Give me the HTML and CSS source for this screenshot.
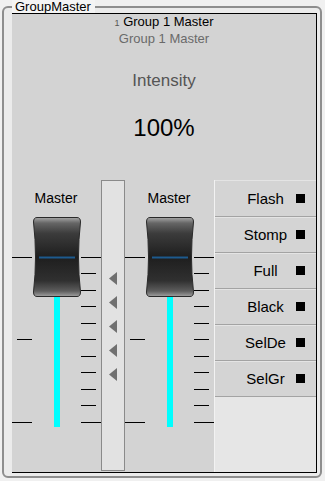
FILE: index.html
```html
<!DOCTYPE html>
<html lang="en">

<head>
    <meta charset="UTF-8">
    <meta name="viewport" content="width=device-width, initial-scale=1.0">
    <title>GroupMaster</title>
    <link rel="stylesheet" href="styles.css">
</head>

<body>
    <svg class="defs" aria-hidden="true">
        <defs>
            <linearGradient id="knob" x1="0" y1="0" x2="0" y2="1">
                <stop offset="0" stop-color="#a8a8a8"/>
                <stop offset="0.07" stop-color="#666"/>
                <stop offset="0.2" stop-color="#3c3c3c"/>
                <stop offset="0.5" stop-color="#1e1e1e"/>
                <stop offset="0.8" stop-color="#303030"/>
                <stop offset="0.93" stop-color="#5c5c5c"/>
                <stop offset="1" stop-color="#a0a0a0"/>
            </linearGradient>
            <symbol id="fader" viewBox="0 0 89 255">
                <!-- left scale -->
                <rect x="0" y="40" width="20" height="1"/>
                <rect x="5" y="122" width="15" height="1"/>
                <rect x="0" y="205" width="20" height="1"/>
                <!-- right scale -->
                <rect x="69" y="40" width="20" height="1"/>
                <rect x="69" y="56" width="15" height="1"/>
                <rect x="69" y="73" width="15" height="1"/>
                <rect x="69" y="89" width="15" height="1"/>
                <rect x="69" y="106" width="15" height="1"/>
                <rect x="69" y="122" width="15" height="1"/>
                <rect x="69" y="139" width="15" height="1"/>
                <rect x="69" y="155" width="15" height="1"/>
                <rect x="69" y="172" width="15" height="1"/>
                <rect x="69" y="188" width="15" height="1"/>
                <rect x="69" y="205" width="20" height="1"/>
                <!-- level -->
                <rect x="42" y="78" width="6" height="132" fill="#00ffff"/>
                <!-- knob -->
                <path transform="translate(21,0)" d="M4,0.5 H44 Q47.5,0.5 47.5,5 Q43.5,40 47.5,75 Q47.5,79.5 44,79.5 H4 Q0.5,79.5 0.5,75 Q4.5,40 0.5,5 Q0.5,0.5 4,0.5 Z" fill="url(#knob)" stroke="#2a2a2a" stroke-width="1"/>
                <rect x="27" y="39.5" width="36" height="2" fill="#1d5a8e"/>
            </symbol>
        </defs>
    </svg>

    <fieldset class="group">
        <legend>GroupMaster</legend>
        <div class="panel">
            <div class="head">
                <div class="title"><span class="num">1</span> Group 1 Master</div>
                <div class="subtitle">Group 1 Master</div>
                <div class="param">Intensity</div>
                <div class="value">100%</div>
            </div>
            <div class="deck">
                <div class="fader">
                    <div class="fader-label">Master</div>
                    <svg class="fader-svg" width="89" height="255"><use href="#fader"/></svg>
                </div>
                <div class="rail">
                    <svg width="22" height="289" class="rail-svg">
                        <polygon points="15,91 7,97.5 15,104"/>
                        <polygon points="15,115 7,121.5 15,128"/>
                        <polygon points="15,139 7,145.5 15,152"/>
                        <polygon points="15,163 7,169.5 15,176"/>
                        <polygon points="15,187 7,193.5 15,200"/>
                    </svg>
                </div>
                <div class="fader">
                    <div class="fader-label">Master</div>
                    <svg class="fader-svg" width="89" height="255"><use href="#fader"/></svg>
                </div>
                <div class="buttons">
                    <div class="btn">Flash<span class="led"></span></div>
                    <div class="btn">Stomp<span class="led"></span></div>
                    <div class="btn">Full<span class="led"></span></div>
                    <div class="btn">Black<span class="led"></span></div>
                    <div class="btn">SelDe<span class="led"></span></div>
                    <div class="btn">SelGr<span class="led"></span></div>
                </div>
            </div>
        </div>
    </fieldset>
</body>

</html>
```

FILE: styles.css
```css
html, body {
    margin: 0;
    height: 100%;
}

body {
    background-color: #f0f0f0;
    padding: 0 3px 3px 2px;
    box-sizing: border-box;
    font-family: 'Liberation Sans', Arial, sans-serif;
    color: #000;
}

.defs {
    position: absolute;
    width: 0;
    height: 0;
}

.group {
    margin: 0;
    height: 100%;
    box-sizing: border-box;
    border: 2px solid #8e8e8e;
    border-radius: 6px;
    padding: 0 3px 3px 8px;
    background-color: #ebebeb;
}

.group legend {
    font-size: 13px;
    line-height: 14px;
    padding: 0 4px 0 3px;
    background-color: #f4f4f4;
}

.panel {
    margin-top: -1px;
    border-top: 1px solid #000;
    border-right: 1px solid #000;
    border-bottom: 1px solid #000;
    background-color: #d3d3d3;
    height: 458px;
    display: flex;
    flex-direction: column;
}

.head {
    height: 166px;
    text-align: center;
}

.title {
    font-size: 13px;
    line-height: 16px;
}

.num {
    font-size: 9px;
    color: #555;
}

.subtitle {
    font-size: 13px;
    line-height: 16px;
    color: #6a6a6a;
}

.param {
    margin-top: 24px;
    font-size: 17px;
    line-height: 20px;
    color: #555;
}

.value {
    margin-top: 23px;
    font-size: 24px;
    line-height: 28px;
}

.deck {
    display: flex;
    height: 292px;
}

.fader {
    width: 89px;
    display: flex;
    flex-direction: column;
}

.fader-label {
    padding-top: 10px;
    height: 27px;
    font-size: 14px;
    line-height: 16px;
    text-align: center;
    padding-right: 1px;
}

.fader-svg {
    display: block;
}

.rail {
    width: 22px;
    height: 289px;
    border: 1px solid #8a8a8a;
    background-color: #e2e2e2;
}

.rail-svg {
    display: block;
    fill: #707070;
}

.buttons {
    width: 101px;
    border-left: 1px solid #f2f2f2;
    background-color: #e6e6e6;
}

.btn {
    position: relative;
    height: 34px;
    border-top: 1px solid #e4e4e4;
    border-bottom: 1px solid #a3a3a3;
    background-color: #d4d4d4;
    font-size: 15px;
    line-height: 34px;
    text-align: center;
}

.btn:first-child {
    height: 35px;
    line-height: 35px;
}

.led {
    position: absolute;
    right: 11px;
    top: 50%;
    margin-top: -5px;
    width: 9px;
    height: 9px;
    background-color: #000;
}
```
